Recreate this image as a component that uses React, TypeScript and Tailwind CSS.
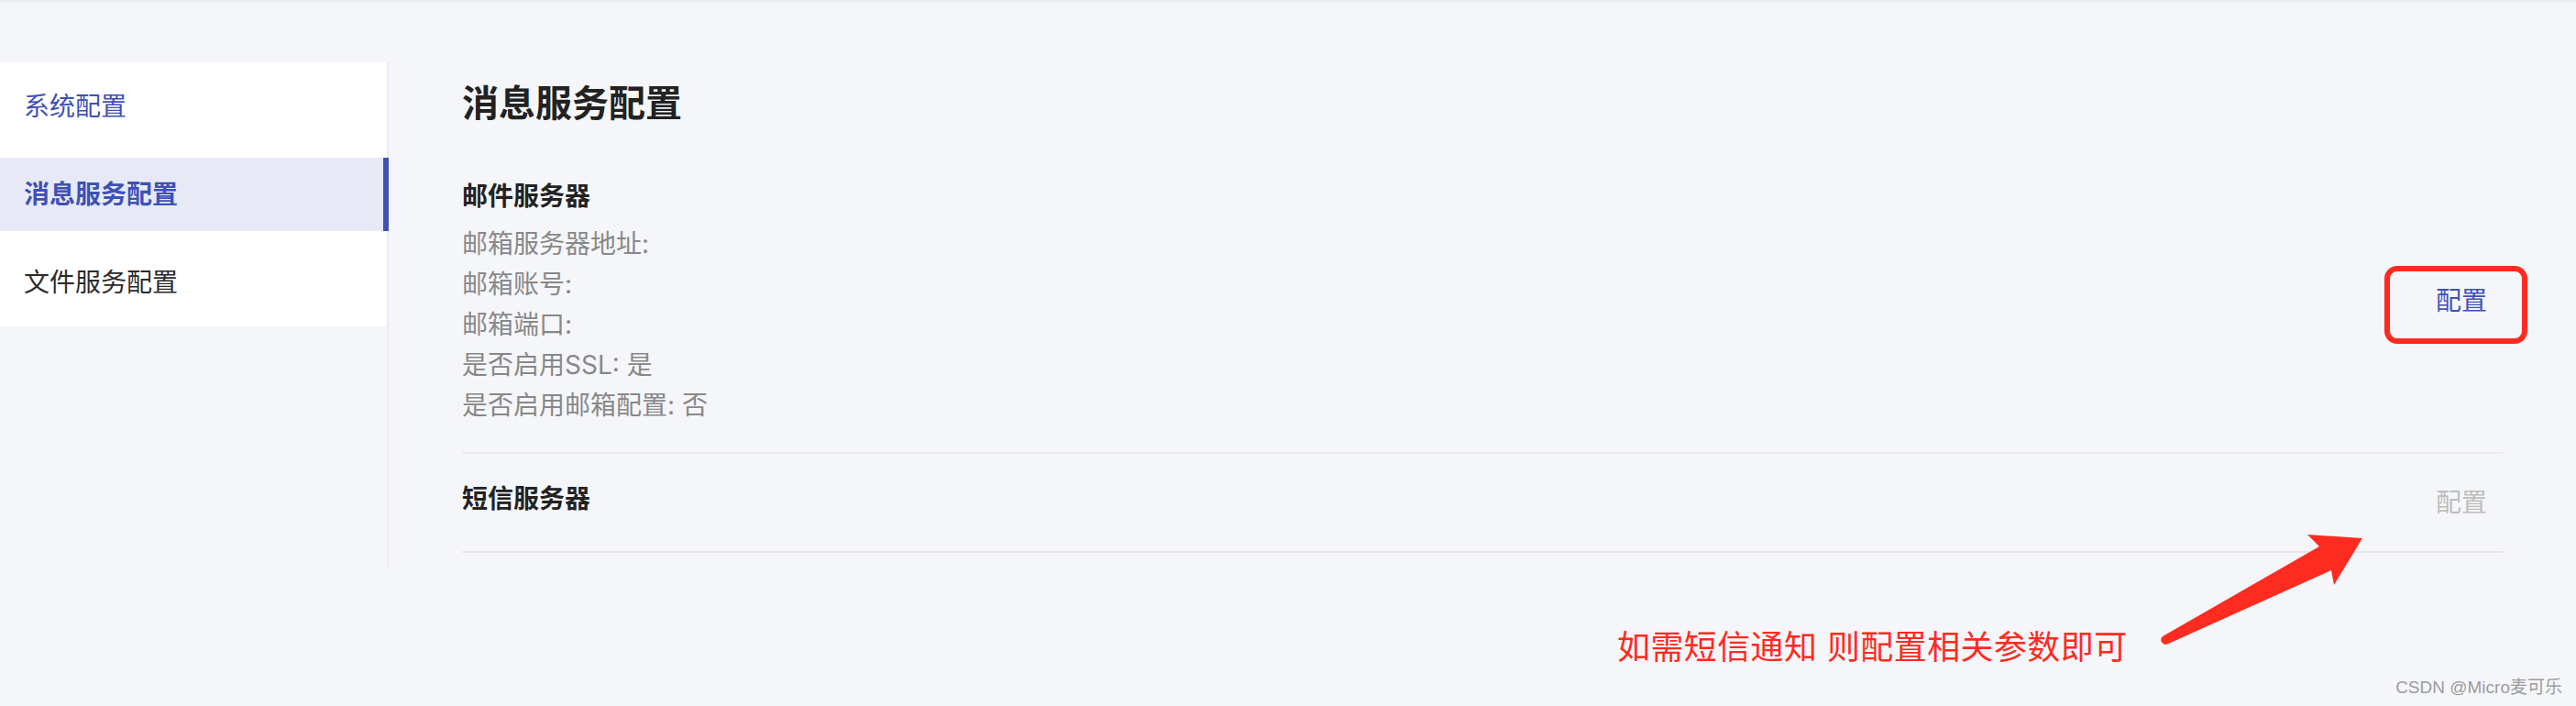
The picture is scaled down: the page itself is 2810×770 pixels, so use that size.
import React from 'react';

const menu = [
  { label: '系统配置', state: 'link' },
  { label: '消息服务配置', state: 'active' },
  { label: '文件服务配置', state: 'plain' },
];

const mailRows = ['邮箱服务器地址:', '邮箱账号:', '邮箱端口:', '是否启用SSL: 是', '是否启用邮箱配置: 否'];

const Sidebar: React.FC = () => {
  return (
    <div className="w-[424px] h-[552px] shrink-0 border-r-2 border-[#ededf0]">
      <div className="bg-white flex flex-col gap-4 py-2">
        {menu.map((m) => (
          <div
            key={m.label}
            className={
              m.state === 'active'
                ? 'relative h-[80px] flex items-center pl-[26px] bg-[#e7eaf6] text-[#3f51b5] font-bold text-[28px]'
                : m.state === 'link'
                ? 'h-[80px] flex items-center pl-[26px] text-[#3f51b5] text-[28px]'
                : 'h-[80px] flex items-center pl-[26px] text-[#2b2b2b] text-[28px]'
            }
          >
            {m.label}
            {m.state === 'active' && <div className="absolute top-0 bottom-0 -right-[2px] w-[6px] bg-[#3f51b5]" />}
          </div>
        ))}
      </div>
    </div>
  );
};

const App: React.FC = () => {
  return (
    <div
      className="relative w-[2810px] h-[770px] overflow-hidden bg-[#f5f6fa]"
      style={{ fontFamily: 'Inter, "Noto Sans CJK SC", sans-serif' }}
    >
      <div className="h-[3px] bg-[#eceef2]" />
      <div className="flex pt-[65px]">
        <Sidebar />
        <div className="flex-1 px-[80px] pt-[17px]">
          <h1 className="h-[56px] leading-[56px] text-[40px] font-bold text-[#222]">消息服务配置</h1>

          <div className="mt-[51px] flex items-center justify-between pb-[29px] border-b-2 border-[#ebebed]">
            <div>
              <div className="leading-[44px] text-[28px] font-bold text-[#222]">邮件服务器</div>
              <div className="mt-2">
                {mailRows.map((r) => (
                  <div key={r} className="leading-[44px] text-[28px] text-[#888]">
                    {r}
                  </div>
                ))}
              </div>
            </div>
            <div className="relative mr-[17px]">
              <span className="leading-[40px] text-[28px] text-[#3f51b5]">配置</span>
              <div className="absolute -left-[56px] -right-[44px] -top-[18px] -bottom-[27px] border-[6px] border-[#fe2b20] rounded-[14px]" />
            </div>
          </div>

          <div className="h-[108px] flex items-center justify-between border-b-2 border-[#e6e6e8]">
            <div className="-mt-[8px] leading-[44px] text-[28px] font-bold text-[#222]">短信服务器</div>
            <span className="mr-[17px] leading-[40px] text-[28px] text-[#bdbdbd]">配置</span>
          </div>
        </div>
      </div>

      <div className="absolute left-[1764px] top-[684px] leading-[44px] text-[36px] tracking-[0.4px] text-[#fe2b20]">
        如需短信通知 则配置相关参数即可
      </div>

      <svg className="absolute left-0 top-0 pointer-events-none" width="2810" height="770" viewBox="0 0 2810 770">
        <path
          d="M2360,693.5 L2530,596 L2517,583 L2577,587 L2546,638 L2543,622 L2364.3,702.5 A5,5 0 0 1 2360,693.5 Z"
          fill="#fe2b20"
        />
      </svg>

      <div
        className="absolute right-[15px] bottom-[6px] text-[19px] leading-[28px] text-[#9c9c9c]"
        style={{ fontFamily: '"Liberation Sans", "Noto Sans CJK SC", sans-serif' }}
      >
        CSDN @Micro麦可乐
      </div>
    </div>
  );
};

export default App;
